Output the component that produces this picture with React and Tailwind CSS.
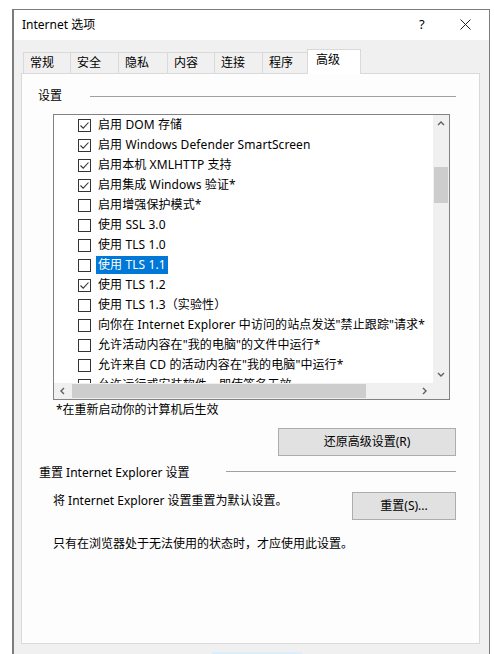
import React from "react";

const items = [
  { t: "启用 DOM 存储", c: true },
  { t: "启用 Windows Defender SmartScreen", c: true },
  { t: "启用本机 XMLHTTP 支持", c: true },
  { t: "启用集成 Windows 验证*", c: true },
  { t: "启用增强保护模式*", c: false },
  { t: "使用 SSL 3.0", c: false },
  { t: "使用 TLS 1.0", c: false },
  { t: "使用 TLS 1.1", c: false, sel: true },
  { t: "使用 TLS 1.2", c: true },
  { t: "使用 TLS 1.3（实验性）", c: false },
  { t: '向你在 Internet Explorer 中访问的站点发送"禁止跟踪"请求*', c: false },
  { t: '允许活动内容在"我的电脑"的文件中运行*', c: false },
  { t: '允许来自 CD 的活动内容在"我的电脑"中运行*', c: false },
  { t: "允许运行或安装软件，即使签名无效", c: false },
];

function Check({ on }) {
  return (
    <div className="w-[13px] h-[13px] border border-[#333333] bg-white shrink-0 flex items-center justify-center">
      {on && (
        <svg width="11" height="11" viewBox="0 0 11 11">
          <path d="M1.5 5.5 L4.2 8.2 L9.5 2.5" fill="none" stroke="#333333" strokeWidth="1.1" />
        </svg>
      )}
    </div>
  );
}

function Chev({ dir }) {
  const d = {
    up: "M1 5 L4 2 L7 5",
    down: "M1 2 L4 5 L7 2",
    left: "M5 1 L2 4 L5 7",
    right: "M2 1 L5 4 L2 7",
  }[dir];
  return (
    <svg width="8" height="8" viewBox="0 0 8 8">
      <path d={d} fill="none" stroke="#606060" strokeWidth="1.4" />
    </svg>
  );
}

function Tab({ label, w, selected }) {
  if (selected) {
    return (
      <div className={`relative z-10 -ml-[2px] h-[25px] ${w} bg-white border-t border-l border-r border-[#d9d9d9] -mb-px pl-[8px] pt-[1px] flex items-start`}>
        <span className="leading-[18px]">{label}</span>
      </div>
    );
  }
  return (
    <div className={`h-[21px] ${w} bg-[#f0f0f0] border-t border-l border-[#d9d9d9] pl-[6px] flex items-center`}>
      <span className="leading-[16px]">{label}</span>
    </div>
  );
}

export default function App() {
  return (
    <div
      className="w-[494px] h-[654px] overflow-hidden bg-white text-[12px] text-black"
      style={{ fontFamily: '"Noto Sans", "Noto Sans CJK SC", sans-serif' }}
    >
      <div className="ml-[12px] mt-[9px] w-[478px] h-[700px] border border-[#7c7c7c] border-l-2 bg-[#f0f0f0]">
        {/* title bar */}
        <div className="h-[30px] bg-white flex items-center pl-[8px] pb-[1px]">
          <span className="flex-1">Internet 选项</span>
          <span className="w-[12px] text-[13px] mr-[29px]">?</span>
          <svg width="11" height="11" viewBox="0 0 11 11" className="mr-[18px]">
            <path d="M0.5 0.5 L10.5 10.5 M10.5 0.5 L0.5 10.5" stroke="#222" strokeWidth="1" />
          </svg>
        </div>
        {/* body */}
        <div className="pl-[7px] pt-[8px]">
          <div className="flex items-end h-[25px] pl-[2px]">
            <Tab label="常规" w="w-[47px]" />
            <Tab label="安全" w="w-[48px]" />
            <Tab label="隐私" w="w-[49px]" />
            <Tab label="内容" w="w-[47px]" />
            <Tab label="连接" w="w-[48px]" />
            <Tab label="程序" w="w-[47px]" />
            <Tab label="高级" w="w-[54px]" selected />
          </div>
          <div className="w-[459px] h-[571px] bg-[#fdfdfd] border border-[#d9d9d9] pt-[14px]">
            {/* group header */}
            <div className="flex items-center h-[16px]">
              <span className="ml-[16px] w-[52px]">设置</span>
              <div className="w-[366px] h-px bg-[#a0a0a0]"></div>
            </div>
            {/* listbox */}
            <div className="ml-[31px] mt-[10px] w-[397px] h-[286px] border border-[#828282] bg-white flex flex-col">
              <div className="flex h-[268px]">
                <div className="w-[379px] h-[268px] overflow-hidden tracking-[0.1px]">
                  {items.map((it, i) => (
                    <div key={i} className="h-[20px] flex items-center pl-[24px] whitespace-nowrap">
                      <Check on={it.c} />
                      <span
                        className={`ml-[5px] px-[2px] h-[18px] leading-[18px] ${it.sel ? "bg-[#0078d7] text-white" : ""}`}
                      >
                        {it.t}
                      </span>
                    </div>
                  ))}
                </div>
                <div className="w-[16px] h-[268px] bg-[#f0f0f0] flex flex-col">
                  <div className="h-[17px] flex items-center justify-center">
                    <Chev dir="up" />
                  </div>
                  <div className="mt-[35px] mx-[1px] h-[36px] bg-[#cdcdcd]"></div>
                  <div className="flex-1"></div>
                  <div className="h-[17px] flex items-center justify-center">
                    <Chev dir="down" />
                  </div>
                </div>
              </div>
              <div className="flex h-[16px]">
                <div className="w-[379px] h-[16px] bg-[#f0f0f0] flex items-center">
                  <div className="w-[17px] flex items-center justify-center">
                    <Chev dir="left" />
                  </div>
                  <div className="ml-[1px] w-[294px] h-[14px] bg-[#cdcdcd]"></div>
                  <div className="flex-1"></div>
                  <div className="w-[17px] flex items-center justify-center">
                    <Chev dir="right" />
                  </div>
                </div>
                <div className="w-[16px] h-[16px] bg-[#f0f0f0]"></div>
              </div>
            </div>
            <div className="ml-[34px] mt-[2px] h-[16px] leading-[16px]">*在重新启动你的计算机后生效</div>
            <div className="flex justify-end mr-[23px] mt-[10px]">
              <div className="w-[178px] h-[28px] bg-[#e1e1e1] border border-[#adadad] flex items-center justify-center">
                还原高级设置(R)
              </div>
            </div>
            {/* group 2 */}
            <div className="flex items-center h-[16px] mt-[9px]">
              <span className="ml-[17px] w-[187px] leading-[16px]">重置 Internet Explorer 设置</span>
              <div className="w-[230px] h-px bg-[#a0a0a0] -mt-[3px]"></div>
            </div>
            <div className="flex items-start justify-between mt-[11px] mr-[23px]">
              <span className="ml-[31px] leading-[16px] pt-[1px]">将 Internet Explorer 设置重置为默认设置。</span>
              <div className="w-[104px] h-[28px] bg-[#e1e1e1] border border-[#adadad] flex items-center justify-center">
                重置(S)...
              </div>
            </div>
            <div className="ml-[31px] mt-[16px] leading-[16px]">只有在浏览器处于无法使用的状态时，才应使用此设置。</div>
          </div>
          <div className="flex mt-[8px] pl-[191px]">
            <div className="w-[90px] h-[24px] bg-[#dbeefc]"></div>
          </div>
        </div>
      </div>
    </div>
  );
}
